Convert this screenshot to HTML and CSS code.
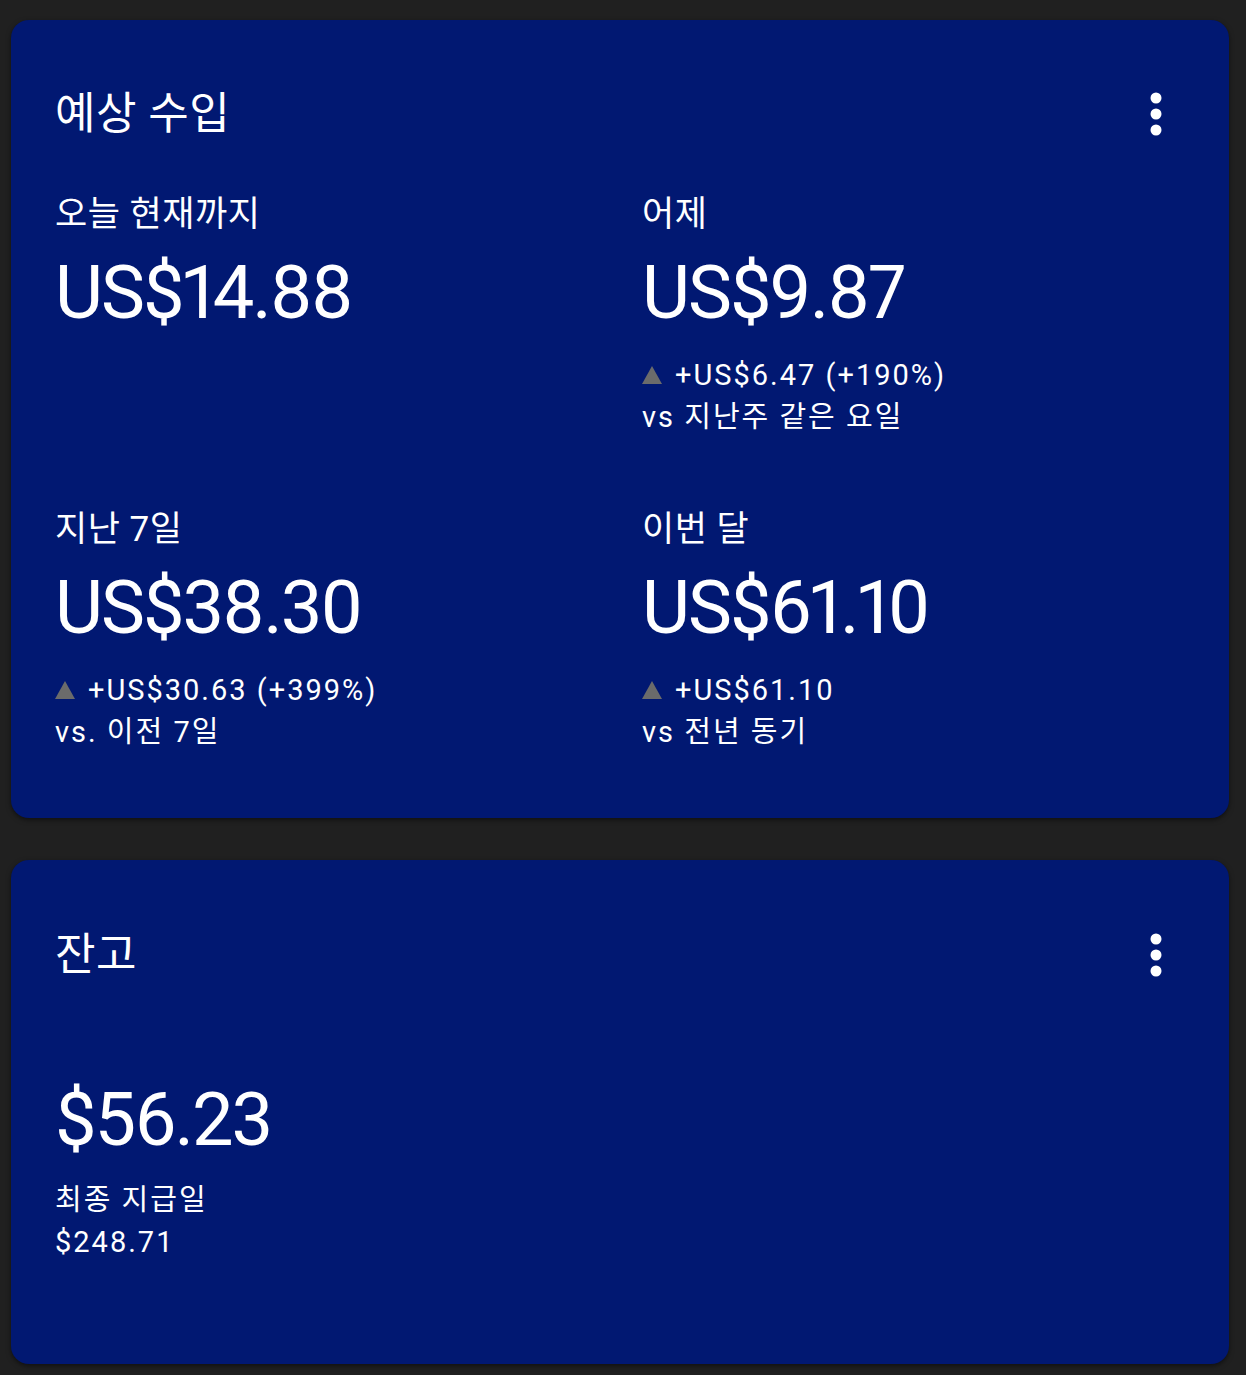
FILE: index.html
```html
<!DOCTYPE html>
<html lang="ko">
<head>
  <meta charset="UTF-8">
  <meta name="viewport" content="width=device-width, initial-scale=1.0">
  <title>예상 수입</title>
  <link rel="stylesheet" href="styles.css">
</head>
<body>
  <section class="card earnings">
    <div class="card-header">
      <h2 class="card-title">예상 수입</h2>
      <button class="menu-btn" type="button" aria-label="더보기">
        <svg width="12" height="44" viewBox="0 0 12 44"><circle cx="6" cy="6" r="5.5"/><circle cx="6" cy="22" r="5.5"/><circle cx="6" cy="38" r="5.5"/></svg>
      </button>
    </div>

    <div class="stats">
      <div class="stat">
        <div class="stat-label">오늘 현재까지</div>
        <div class="stat-value">US$14.88</div>
      </div>

      <div class="stat">
        <div class="stat-label">어제</div>
        <div class="stat-value">US$9.87</div>
        <div class="stat-change">
          <svg class="arrow" width="20" height="18" viewBox="0 0 20 18"><polygon points="10,0 20,18 0,18"/></svg>
          <span>+US$6.47 (+190%)</span>
        </div>
        <div class="stat-compare">vs 지난주 같은 요일</div>
      </div>

      <div class="stat">
        <div class="stat-label">지난 7일</div>
        <div class="stat-value">US$38.30</div>
        <div class="stat-change">
          <svg class="arrow" width="20" height="18" viewBox="0 0 20 18"><polygon points="10,0 20,18 0,18"/></svg>
          <span>+US$30.63 (+399%)</span>
        </div>
        <div class="stat-compare">vs. 이전 7일</div>
      </div>

      <div class="stat">
        <div class="stat-label">이번 달</div>
        <div class="stat-value">US$61.10</div>
        <div class="stat-change">
          <svg class="arrow" width="20" height="18" viewBox="0 0 20 18"><polygon points="10,0 20,18 0,18"/></svg>
          <span>+US$61.10</span>
        </div>
        <div class="stat-compare">vs 전년 동기</div>
      </div>
    </div>
  </section>

  <section class="card balance">
    <div class="card-header">
      <h2 class="card-title">잔고</h2>
      <button class="menu-btn" type="button" aria-label="더보기">
        <svg width="12" height="44" viewBox="0 0 12 44"><circle cx="6" cy="6" r="5.5"/><circle cx="6" cy="22" r="5.5"/><circle cx="6" cy="38" r="5.5"/></svg>
      </button>
    </div>

    <div class="balance-body">
      <div class="stat-value">$56.23</div>
      <div class="stat-compare">최종 지급일</div>
      <div class="stat-compare">$248.71</div>
    </div>
  </section>
</body>
</html>
```

FILE: styles.css
```css
body {
  font-family: Roboto, "Noto Sans CJK KR", sans-serif;
  background-color: #202020;
  color: #fff;
  margin: 0;
  padding: 20px 17px 11px 11px;
}

.card {
  background: #011872;
  border-radius: 18px;
  box-shadow: 0 2px 5px rgba(0, 0, 0, 0.5);
  padding: 70px 44px 65px;
}

.balance {
  margin-top: 42px;
  padding-top: 71px;
  padding-bottom: 101px;
}

.card-header {
  display: flex;
  justify-content: space-between;
  align-items: center;
  height: 48px;
}

.card-title {
  margin: 0;
  font-size: 44px;
  line-height: 48px;
  font-weight: 400;
  letter-spacing: 0.5px;
}

.menu-btn {
  background: none;
  border: none;
  padding: 0;
  margin-right: 23px;
  fill: #fff;
  display: flex;
}

.stats {
  display: grid;
  grid-template-columns: 587px 1fr;
  row-gap: 72px;
  margin-top: 57px;
}

.stat-label {
  font-size: 35px;
  line-height: 40px;
  letter-spacing: 0.5px;
}

.stat-value {
  font-size: 74px;
  line-height: 80px;
  letter-spacing: -2px;
  font-variant-numeric: proportional-nums;
  margin: 18px 0 21px;
}

.stat-change {
  display: flex;
  align-items: center;
  font-size: 29px;
  line-height: 42px;
  letter-spacing: 2px;
}

.arrow {
  fill: #6b6b6b;
  margin-right: 13px;
}

.stat-compare {
  font-size: 29px;
  line-height: 42px;
  letter-spacing: 2px;
}

.balance-body {
  margin-top: 101px;
}

.balance-body .stat-value {
  margin: 0 0 19px;
}
```
